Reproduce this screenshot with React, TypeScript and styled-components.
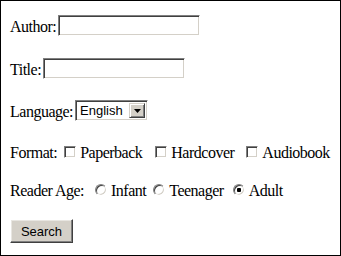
import * as React from "react";
import styled, { createGlobalStyle } from "styled-components";

const GlobalStyle = createGlobalStyle`
  html, body {
    margin: 0;
    padding: 0;
    background: #fff;
  }
  body {
    font-family: "Liberation Serif", "Times New Roman", serif;
    font-size: 16px;
    color: #000;
  }
`;

const Frame = styled.div`
  box-sizing: border-box;
  width: 341px;
  height: 256px;
  border: 1px solid #000;
  padding: 14px 0 0 9px;
`;

const Form = styled.form`
  display: flex;
  flex-direction: column;
  margin: 0;
`;

const Row = styled.div<{ $mt?: number; $h?: number }>`
  display: flex;
  align-items: flex-end;
  height: ${(p) => p.$h ?? 21}px;
  margin-top: ${(p) => p.$mt ?? 0}px;
`;

const Label = styled.span<{ $gap?: number }>`
  line-height: 18px;
  letter-spacing: -0.5px;
  white-space: nowrap;
  margin-right: ${(p) => p.$gap ?? 2}px;
`;

const TextInput = styled.input`
  box-sizing: border-box;
  width: 142px;
  height: 21px;
  margin: 0;
  padding: 1px 3px;
  border: 1px solid;
  border-color: #808080 #fff #fff #808080;
  box-shadow: inset 1px 1px #404040, inset -1px -1px #d4d0c8;
  font: 13px "Liberation Sans", Arial, sans-serif;
  outline: none;
  background: #fff;
`;

const SelectBox = styled.div`
  box-sizing: border-box;
  display: flex;
  align-items: stretch;
  width: 73px;
  height: 21px;
  border: 1px solid;
  border-color: #808080 #fff #fff #808080;
  box-shadow: inset 1px 1px #404040, inset -1px -1px #d4d0c8;
  padding: 2px;
  background: #fff;
`;

const NativeSelect = styled.select`
  appearance: none;
  flex: 1;
  min-width: 0;
  margin: 0;
  border: 0;
  padding: 0 0 0 2px;
  background: transparent;
  font: 13px "Liberation Sans", Arial, sans-serif;
  color: #000;
  outline: none;
`;

const ArrowButton = styled.span`
  box-sizing: border-box;
  display: flex;
  align-items: center;
  justify-content: center;
  width: 16px;
  background: #d4d0c8;
  border: 1px solid;
  border-color: #d4d0c8 #404040 #404040 #d4d0c8;
  box-shadow: inset 1px 1px #fff, inset -1px -1px #808080;
`;

const Option = styled.label<{ $ml?: number }>`
  display: flex;
  align-items: flex-end;
  height: 100%;
  margin-left: ${(p) => p.$ml ?? 0}px;
`;

const Check = styled.input`
  appearance: none;
  box-sizing: border-box;
  align-self: center;
  width: 12px;
  height: 12px;
  margin: 0 4px 0 0;
  border: 1px solid;
  border-color: #808080 #fff #fff #808080;
  box-shadow: inset 1px 1px #404040, inset -1px -1px #d4d0c8;
  background: #fff;
`;

const Radio = styled(Check)`
  border-radius: 50%;
  background: #fff;

  &:checked {
    background: radial-gradient(circle, #000 0 2px, #fff 2.5px);
  }
`;

const Button = styled.button`
  box-sizing: border-box;
  width: 63px;
  height: 24px;
  margin: 0;
  padding: 0;
  background: #d4d0c8;
  border: 1px solid;
  border-color: #fff #404040 #404040 #fff;
  box-shadow: inset -1px -1px #808080, inset 1px 1px #e8e6e1;
  font: 13px "Liberation Sans", Arial, sans-serif;
  color: #000;
`;

const Arrow = () => (
  <svg width="7" height="4" viewBox="0 0 7 4">
    <path d="M0 0h7L3.5 4z" fill="#000" />
  </svg>
);

export default function App() {
  return (
    <>
      <GlobalStyle />
      <Frame>
        <Form onSubmit={(e) => e.preventDefault()}>
          <Row>
            <Label>Author:</Label>
            <TextInput type="text" />
          </Row>
          <Row $mt={22}>
            <Label>Title:</Label>
            <TextInput type="text" />
          </Row>
          <Row $mt={21}>
            <Label>Language:</Label>
            <SelectBox>
              <NativeSelect defaultValue="English">
                <option>English</option>
              </NativeSelect>
              <ArrowButton>
                <Arrow />
              </ArrowButton>
            </SelectBox>
          </Row>
          <Row $mt={20}>
            <Label $gap={7}>Format:</Label>
            <Option>
              <Check type="checkbox" />
              <Label $gap={0}>Paperback</Label>
            </Option>
            <Option $ml={13}>
              <Check type="checkbox" />
              <Label $gap={0}>Hardcover</Label>
            </Option>
            <Option $ml={12}>
              <Check type="checkbox" />
              <Label $gap={0}>Audiobook</Label>
            </Option>
          </Row>
          <Row $mt={17}>
            <Label $gap={11}>Reader Age:</Label>
            <Option>
              <Radio type="radio" name="age" />
              <Label $gap={0}>Infant</Label>
            </Option>
            <Option $ml={7}>
              <Radio type="radio" name="age" />
              <Label $gap={0}>Teenager</Label>
            </Option>
            <Option $ml={9}>
              <Radio type="radio" name="age" defaultChecked />
              <Label $gap={0}>Adult</Label>
            </Option>
          </Row>
          <Row $mt={19} $h={24}>
            <Button type="submit">Search</Button>
          </Row>
        </Form>
      </Frame>
    </>
  );
}
